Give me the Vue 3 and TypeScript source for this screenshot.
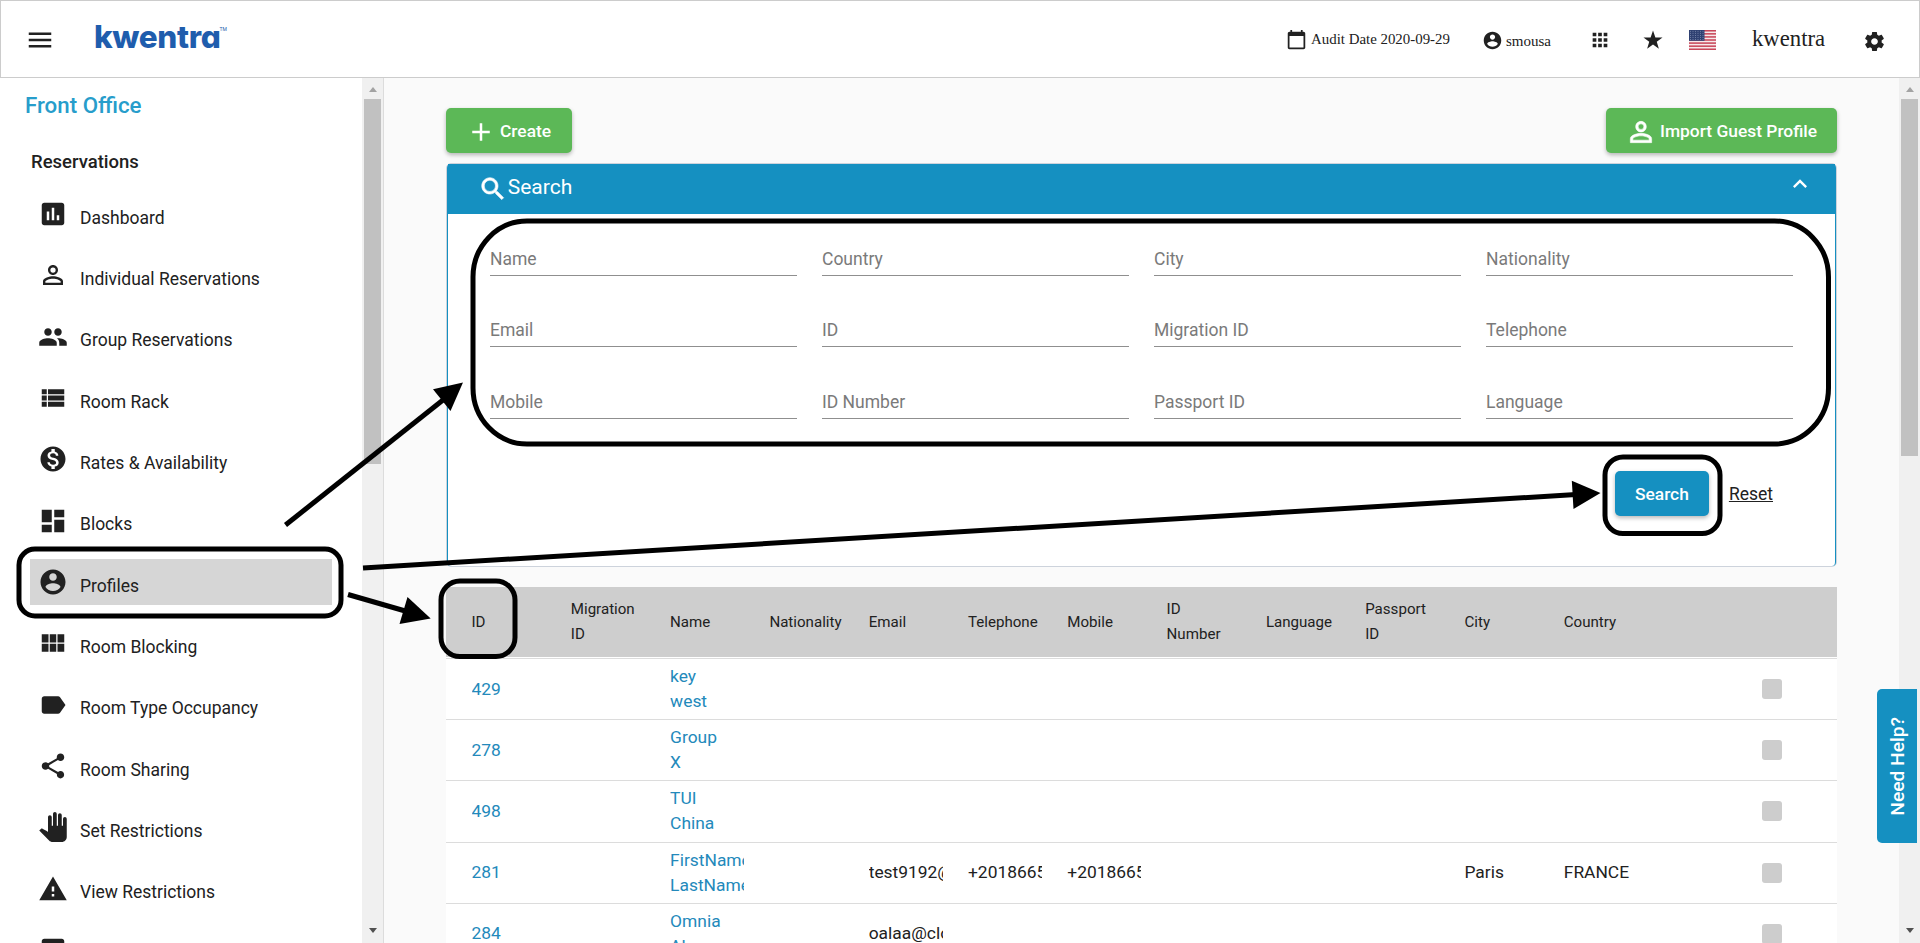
<script setup lang="ts">
interface NavItem {
  label: string
  icon: string
  active?: boolean
}

interface Profile {
  id: string
  name: string[]
  email?: string
  telephone?: string
  mobile?: string
  city?: string
  country?: string
}

const icons = {
  menu: 'M3 18h18v-2H3v2zm0-5h18v-2H3v2zm0-7v2h18V6H3z',
  chart: 'M19 3H5c-1.1 0-2 .9-2 2v14c0 1.1.9 2 2 2h14c1.1 0 2-.9 2-2V5c0-1.1-.9-2-2-2zM9 17H7v-7h2v7zm4 0h-2V7h2v10zm4 0h-2v-4h2v4z',
  personOutline: 'M12 5.9a2.1 2.1 0 1 1 0 4.2 2.1 2.1 0 0 1 0-4.2m0 9c2.97 0 6.1 1.46 6.1 2.1v1.1H5.9V17c0-.64 3.13-2.1 6.1-2.1M12 4C9.79 4 8 5.79 8 8s1.79 4 4 4 4-1.79 4-4-1.79-4-4-4zm0 9c-2.67 0-8 1.34-8 4v3h16v-3c0-2.66-5.33-4-8-4z',
  people: 'M16 11c1.66 0 2.99-1.34 2.99-3S17.66 5 16 5s-3 1.34-3 3 1.34 3 3 3zm-8 0c1.66 0 2.99-1.34 2.99-3S9.66 5 8 5 5 6.34 5 8s1.34 3 3 3zm0 2c-2.33 0-7 1.17-7 3.5V19h14v-2.5c0-2.33-4.67-3.5-7-3.5zm8 0c-.29 0-.62.02-.97.05 1.16.84 1.97 1.97 1.97 3.45V19h6v-2.5c0-2.33-4.67-3.5-7-3.5z',
  viewList: 'M3 14h4v-4H3v4zm0 5h4v-4H3v4zM3 9h4V5H3v4zm5 5h13v-4H8v4zm0 5h13v-4H8v4zM8 5v4h13V5H8z',
  money: 'M12 2C6.48 2 2 6.48 2 12s4.48 10 10 10 10-4.48 10-10S17.52 2 12 2zm1.41 16.09V20h-2.67v-1.93c-1.71-.36-3.16-1.46-3.27-3.4h1.96c.1 1.05.82 1.87 2.65 1.87 1.96 0 2.4-.98 2.4-1.59 0-.83-.44-1.61-2.67-2.14-2.48-.6-4.18-1.62-4.18-3.67 0-1.72 1.39-2.84 3.11-3.21V4h2.67v1.95c1.86.45 2.79 1.86 2.85 3.39H14.3c-.05-1.11-.64-1.87-2.22-1.87-1.5 0-2.4.68-2.4 1.64 0 .84.65 1.39 2.67 1.91s4.18 1.39 4.18 3.91c-.01 1.83-1.38 2.83-3.12 3.16z',
  dashboard: 'M3 13h8V3H3v10zm0 8h8v-6H3v6zm10 0h8V11h-8v10zm0-18v6h8V3h-8z',
  account: 'M12 2C6.48 2 2 6.48 2 12s4.48 10 10 10 10-4.48 10-10S17.52 2 12 2zm0 3c1.66 0 3 1.34 3 3s-1.34 3-3 3-3-1.34-3-3 1.34-3 3-3zm0 14.2c-2.5 0-4.71-1.28-6-3.22.03-1.99 4-3.08 6-3.08 1.99 0 5.97 1.09 6 3.08-1.29 1.94-3.5 3.22-6 3.22z',
  viewModule: 'M3 11.5h5.4V5H3v6.5zm0 7.5h5.4v-6.5H3V19zm6.4 0h5.2v-6.5H9.4V19zm6.2 0H21v-6.5h-5.4V19zM9.4 11.5h5.2V5H9.4v6.5zM15.6 5v6.5H21V5h-5.4z',
  label: 'M17.63 5.84C17.27 5.33 16.67 5 16 5L5 5.01C3.9 5.01 3 5.9 3 7v10c0 1.1.9 1.99 2 1.99L16 19c.67 0 1.27-.33 1.63-.84L22 12l-4.37-6.16z',
  share: 'M18 16.08c-.76 0-1.44.3-1.96.77L8.91 12.7c.05-.23.09-.46.09-.7s-.04-.47-.09-.7l7.05-4.11c.54.5 1.25.81 2.04.81 1.66 0 3-1.34 3-3s-1.34-3-3-3-3 1.34-3 3c0 .24.04.47.09.7L8.04 9.81C7.5 9.31 6.79 9 6 9c-1.66 0-3 1.34-3 3s1.34 3 3 3c.79 0 1.5-.31 2.04-.81l7.12 4.16c-.05.21-.08.43-.08.65 0 1.61 1.31 2.92 2.92 2.92s2.92-1.31 2.92-2.92-1.31-2.92-2.92-2.92z',
  hand: 'M23 5.5V20c0 2.2-1.8 4-4 4h-7.3c-1.08 0-2.1-.43-2.85-1.19L1 14.83s1.26-1.23 1.3-1.25c.22-.19.49-.29.79-.29.22 0 .42.06.6.16.04.01 4.31 2.46 4.31 2.46V4c0-.83.67-1.5 1.5-1.5S11 3.17 11 4v7h1V1.5c0-.83.67-1.5 1.5-1.5S15 .67 15 1.5V11h1V2.5c0-.83.67-1.5 1.5-1.5s1.5.67 1.5 1.5V11h1V5.5c0-.83.67-1.5 1.5-1.5s1.5.67 1.5 1.5z',
  warning: 'M1 21h22L12 2 1 21zm12-3h-2v-2h2v2zm0-4h-2v-4h2v4z',
  calendar: 'M20 3h-1V1h-2v2H7V1H5v2H4c-1.1 0-2 .9-2 2v16c0 1.1.9 2 2 2h16c1.1 0 2-.9 2-2V5c0-1.1-.9-2-2-2zm0 18H4V8h16v13z',
  apps: 'M4 8h4V4H4v4zm6 12h4v-4h-4v4zm-6 0h4v-4H4v4zm0-6h4v-4H4v4zm6 0h4v-4h-4v4zm6-10v4h4V4h-4zm-6 4h4V4h-4v4zm6 6h4v-4h-4v4zm0 6h4v-4h-4v4z',
  star: 'M12 1.6l2.6 7.6H22.4l-6.3 4.7 2.3 7.7-6.4-4.7-6.4 4.7 2.3-7.7-6.3-4.7h7.8z',
  gear: 'M19.43 12.98c.04-.32.07-.64.07-.98s-.03-.66-.07-.98l2.11-1.65c.19-.15.24-.42.12-.64l-2-3.46c-.12-.22-.39-.3-.61-.22l-2.49 1c-.52-.4-1.08-.73-1.69-.98l-.38-2.65C14.46 2.18 14.25 2 14 2h-4c-.25 0-.46.18-.49.42l-.38 2.65c-.61.25-1.17.59-1.69.98l-2.49-1c-.23-.09-.49 0-.61.22l-2 3.46c-.13.22-.07.49.12.64l2.11 1.65c-.04.32-.07.65-.07.98s.03.66.07.98l-2.11 1.65c-.19.15-.24.42-.12.64l2 3.46c.12.22.39.3.61.22l2.49-1c.52.4 1.08.73 1.69.98l.38 2.65c.03.24.24.42.49.42h4c.25 0 .46-.18.49-.42l.38-2.65c.61-.25 1.17-.59 1.69-.98l2.49 1c.23.09.49 0 .61-.22l2-3.46c.12-.22.07-.49-.12-.64l-2.11-1.65zM12 15.5c-1.93 0-3.5-1.57-3.5-3.5s1.57-3.5 3.5-3.5 3.5 1.57 3.5 3.5-1.57 3.5-3.5 3.5z',
  add: 'M19 13h-6v6h-2v-6H5v-2h6V5h2v6h6v2z',
  search: 'M15.5 14h-.79l-.28-.27C15.41 12.59 16 11.11 16 9.5 16 5.91 13.09 3 9.5 3S3 5.91 3 9.5 5.91 16 9.5 16c1.61 0 3.09-.59 4.23-1.57l.27.28v.79l5 4.99L20.49 19l-4.99-5zm-6 0C7.01 14 5 11.99 5 9.5S7.01 5 9.5 5 14 7.01 14 9.5 11.99 14 9.5 14z',
  expandLess: 'M12 8l-6 6 1.41 1.41L12 10.83l4.59 4.58L18 14z',
}

const nav: NavItem[] = [
  { label: 'Dashboard', icon: icons.chart },
  { label: 'Individual Reservations', icon: icons.personOutline },
  { label: 'Group Reservations', icon: icons.people },
  { label: 'Room Rack', icon: icons.viewList },
  { label: 'Rates & Availability', icon: icons.money },
  { label: 'Blocks', icon: icons.dashboard },
  { label: 'Profiles', icon: icons.account, active: true },
  { label: 'Room Blocking', icon: icons.viewModule },
  { label: 'Room Type Occupancy', icon: icons.label },
  { label: 'Room Sharing', icon: icons.share },
  { label: 'Set Restrictions', icon: icons.hand },
  { label: 'View Restrictions', icon: icons.warning },
  { label: '', icon: icons.chart },
]

const fields: string[] = [
  'Name', 'Country', 'City', 'Nationality',
  'Email', 'ID', 'Migration ID', 'Telephone',
  'Mobile', 'ID Number', 'Passport ID', 'Language',
]

const columns: string[] = [
  'ID', 'Migration ID', 'Name', 'Nationality', 'Email', 'Telephone',
  'Mobile', 'ID Number', 'Language', 'Passport ID', 'City', 'Country',
]

const profiles: Profile[] = [
  { id: '429', name: ['key', 'west'] },
  { id: '278', name: ['Group', 'X'] },
  { id: '498', name: ['TUI', 'China'] },
  { id: '281', name: ['FirstName', 'LastName'], email: 'test9192@', telephone: '+2018665', mobile: '+2018665', city: 'Paris', country: 'FRANCE' },
  { id: '284', name: ['Omnia', 'Alaa'], email: 'oalaa@clo' },
]

const stripes: number[] = [0, 2, 4, 6, 8, 10, 12]
</script>

<template>
  <div class="app">
    <header class="topbar">
      <svg class="ic menu" viewBox="0 0 24 24"><path :d="icons.menu" /></svg>
      <div class="logo"><span class="word">kwentra</span><span class="tm">TM</span></div>
      <div class="tools">
        <svg class="ic cal" viewBox="0 0 24 24"><path :d="icons.calendar" /></svg>
        <span class="audit">Audit Date 2020-09-29</span>
        <svg class="ic usr" viewBox="0 0 24 24"><path :d="icons.account" /></svg>
        <span class="user">smousa</span>
        <svg class="ic apps" viewBox="0 0 24 24"><path :d="icons.apps" /></svg>
        <svg class="ic star" viewBox="0 0 24 24"><path :d="icons.star" /></svg>
        <svg class="flag" viewBox="0 0 27 20" preserveAspectRatio="none">
          <rect width="27" height="20" fill="#f6e9ea" />
          <rect v-for="s in stripes" :key="s" x="0" :y="s * 1.54" width="27" height="1.54" fill="#c8475a" />
          <rect width="15.5" height="10.8" fill="#2f4172" />
          <g fill="#8390b4">
            <template v-for="r in 5" :key="r">
              <circle v-for="c in 6" :key="c" :cx="c * 2.5 - 1" :cy="r * 2.1 - 0.9" r="0.5" />
            </template>
          </g>
        </svg>
        <span class="hotel">kwentra</span>
        <svg class="ic gear" viewBox="0 0 24 24"><path :d="icons.gear" /></svg>
      </div>
    </header>

    <div class="body">
      <aside class="sidebar">
        <nav class="nav">
          <h2>Front Office</h2>
          <h3>Reservations</h3>
          <ul>
            <li v-for="(item, i) in nav" :key="i" :class="{ active: item.active }">
              <svg class="ic" viewBox="0 0 24 24"><path :d="item.icon" /></svg>
              <span>{{ item.label }}</span>
            </li>
          </ul>
        </nav>
        <div class="scroll side">
          <i class="up"></i>
          <div class="thumb"></div>
          <i class="down"></i>
        </div>
      </aside>

      <main class="content">
        <div class="actions">
          <button class="btn green create">
            <svg class="ic" viewBox="0 0 24 24"><path :d="icons.add" /></svg>
            <span>Create</span>
          </button>
          <button class="btn green import">
            <svg class="ic" viewBox="0 0 24 24"><path :d="icons.personOutline" /></svg>
            <span>Import Guest Profile</span>
          </button>
        </div>

        <section class="panel">
          <div class="inner">
            <div class="head">
              <svg class="ic glass" viewBox="0 0 24 24"><path :d="icons.search" /></svg>
              <span>Search</span>
              <svg class="ic less" viewBox="0 0 24 24"><path :d="icons.expandLess" /></svg>
            </div>
            <div class="fields">
              <div v-for="f in fields" :key="f" class="field">{{ f }}</div>
            </div>
            <div class="submit">
              <button class="btn blue">Search</button>
              <a class="reset">Reset</a>
            </div>
          </div>
        </section>

        <div class="table">
          <div class="tr th">
            <div v-for="c in columns" :key="c" class="td"><span>{{ c }}</span></div>
          </div>
          <div v-for="p in profiles" :key="p.id" class="tr">
            <div class="td link">{{ p.id }}</div>
            <div class="td"></div>
            <div class="td link"><div v-for="n in p.name" :key="n">{{ n }}</div></div>
            <div class="td"></div>
            <div class="td">{{ p.email }}</div>
            <div class="td">{{ p.telephone }}</div>
            <div class="td">{{ p.mobile }}</div>
            <div class="td"></div>
            <div class="td"></div>
            <div class="td"></div>
            <div class="td">{{ p.city }}</div>
            <div class="td">{{ p.country }}</div>
            <span class="check"></span>
          </div>
        </div>
      </main>

      <div class="scroll page">
        <i class="up"></i>
        <div class="thumb"></div>
        <i class="down"></i>
      </div>
    </div>

    <div class="help"><span>Need Help?</span></div>

    <svg class="notes" viewBox="0 0 1920 943">
      <g fill="none" stroke="#000" stroke-width="5">
        <rect x="19" y="549" width="322" height="67" rx="16" />
        <rect x="473" y="221" width="1355.5" height="223" rx="54" ry="56" />
        <rect x="1605" y="457" width="115" height="76.5" rx="18" />
        <rect x="441" y="581" width="74" height="75.5" rx="19" />
        <path d="M285.5 525 443 400" />
        <path d="M363 568 1576 494.5" />
        <path d="M348 594.5 407 611.5" />
      </g>
      <path d="M463 382.6 433 389.3 450.5 411z" />
      <path d="M1600.5 493 1571.8 480.8 1573.5 509z" />
      <path d="M430.7 618.6 407.5 597 399.5 624z" />
    </svg>
  </div>
</template>

<style>
html,
body {
  margin: 0;
  overflow: hidden;
}
</style>

<style scoped>
.app {
  position: relative;
  width: 1920px;
  height: 943px;
  overflow: hidden;
  background: #fafafa;
  font-family: Roboto, "Liberation Sans", sans-serif;
  color: #212121;
  display: flex;
  flex-direction: column;
}
.ic {
  display: block;
  flex: none;
  width: 30px;
  height: 30px;
  fill: #212121;
}

/* top bar */
.topbar {
  box-sizing: border-box;
  height: 78px;
  flex: none;
  border: 1px solid #ccc;
  background: #fff;
  display: flex;
  align-items: flex-start;
  padding-left: 24px;
}
.menu { margin-top: 24px; }
.logo {
  display: flex;
  margin: 18px 0 0 39px;
  color: #1f5dad;
}
.word {
  font: 800 31.5px/36px Inter, sans-serif;
  font-feature-settings: "cv11", "ss03";
  letter-spacing: -0.35px;
  width: 125.5px;
}
.tm {
  font: 400 5px/8px Roboto, sans-serif;
  margin-top: 6px;
}
.tools {
  margin-left: auto;
  padding-right: 33px;
  display: flex;
  align-items: flex-start;
  font-family: "Liberation Serif", serif;
}
.cal { width: 21px; height: 21px; margin-top: 28px; }
.audit { font-size: 14.9px; line-height: 20px; margin: 28px 32px 0 4px; white-space: nowrap; width: 139px; }
.usr { width: 21px; height: 21px; margin-top: 29px; }
.user { font-size: 15px; line-height: 20px; margin: 30px 0 0 3px; width: 47px; }
.apps { width: 22px; height: 22px; margin: 28px 0 0 36px; }
.star { width: 22px; height: 22px; margin: 28px 0 0 31px; }
.flag { display: block; width: 27px; height: 20px; margin: 29px 0 0 25px; }
.hotel { font-size: 22.7px; line-height: 26px; margin: 25px 0 0 36px; width: 74px; }
.gear { width: 23px; height: 23px; margin: 29px 0 0 37px; }

.body {
  flex: 1;
  min-height: 0;
  display: flex;
}

/* sidebar */
.sidebar {
  width: 383px;
  flex: none;
  display: flex;
  background: #fff;
  border-right: 1px solid #dcdcdc;
}
.nav {
  flex: 1;
  overflow: hidden;
}
h2 {
  margin: 13px 0 0 25px;
  font-size: 22.3px;
  line-height: 28px;
  font-weight: 500;
  color: #279dcb;
}
h3 {
  margin: 31px 0 0 31px;
  font-size: 18.5px;
  line-height: 24px;
  font-weight: 500;
}
ul {
  margin: 17px 0 0;
  padding: 0;
  list-style: none;
}
li {
  box-sizing: border-box;
  height: 46px;
  margin: 0 30px 15.35px;
  padding-left: 7.7px;
  display: flex;
  align-items: center;
  font-size: 17.5px;
}
li .ic { margin: 0 12.3px 0 0; }
li span { margin-top: 7px; }
li.active { background: #d6d6d6; }

/* scrollbars */
.scroll {
  width: 21px;
  flex: none;
  background: #f0f0f0;
  display: flex;
  flex-direction: column;
  align-items: center;
}
.scroll .up {
  margin: 9px 0 7px;
  border: 4.5px solid transparent;
  border-top: 0;
  border-bottom: 5px solid #a3a3a3;
}
.scroll .down {
  margin: auto 0 10px;
  border: 4.5px solid transparent;
  border-bottom: 0;
  border-top: 5px solid #505050;
}
.thumb {
  width: 17px;
  background: #c1c1c1;
}
.side .thumb { height: 365px; }
.page .thumb { height: 357px; }

/* content */
.content {
  flex: 1;
  min-width: 0;
  padding: 30px 62px 0;
}
.actions {
  display: flex;
  justify-content: space-between;
}
.btn {
  box-sizing: border-box;
  height: 45px;
  border: 0;
  border-radius: 5px;
  padding: 0;
  color: #fff;
  font: 500 17.4px/46px Roboto, sans-serif;
  box-shadow: 0 2px 4px rgba(0, 0, 0, 0.28);
}
.green {
  background: #5cb857;
  display: flex;
  align-items: center;
}
.btn span { height: 45px; }
.btn .ic { fill: #fff; margin-top: 3px; }
.create { width: 126px; padding-left: 20px; }
.create span { margin-left: 4px; }
.import { width: 231px; padding-left: 19px; }
.import .ic { width: 32px; height: 32px; margin-top: 2px; }
.import .ic path { stroke: #fff; stroke-width: 0.4px; }
.import span { margin-left: 3px; white-space: nowrap; }

.panel {
  box-sizing: border-box;
  height: 404px;
  margin-top: 10px;
  border: 1px solid #cdd3dc;
  border-radius: 5px;
  background: #fff;
}
.inner {
  box-sizing: border-box;
  height: 100%;
  border: solid #1590c1;
  border-width: 0 1px;
  border-radius: 4px;
}
.head {
  height: 50px;
  display: flex;
  align-items: center;
  background: #1590c1;
  color: #fff;
  font-size: 21px;
  padding: 0 21px 0 29.7px;
}
.head .ic { fill: #fff; }
.glass path { stroke: #fff; stroke-width: 0.5px; }
.head span { margin: -4px 0 0 0; }
.head .less { width: 28px; height: 28px; margin: -10px 0 0 auto; }
.fields {
  display: grid;
  grid-template-columns: repeat(4, 307px);
  column-gap: 25px;
  grid-template-rows: 71px 72px 71.5px;
  padding-left: 42px;
}
.field {
  box-sizing: border-box;
  height: 62px;
  padding-top: 32px;
  line-height: 26px;
  border-bottom: 1px solid #8f8f8f;
  font-size: 17.5px;
  color: #7a7a7a;
}
.submit {
  display: flex;
  align-items: center;
  justify-content: flex-end;
  margin: 42.5px 62px 0 0;
}
.blue { width: 94px; background: #1590c1; text-align: center; }
.reset {
  margin-left: 20px;
  font-size: 17.5px;
  text-decoration: underline;
}

/* table */
.table { margin-top: 20px; }
.tr {
  box-sizing: border-box;
  height: 61.2px;
  display: flex;
  align-items: center;
  padding-left: 25.5px;
  background: #fff;
  border-bottom: 1px solid #dcdcdc;
  font-size: 17.4px;
  line-height: 25px;
}
.th {
  height: 72px;
  padding-bottom: 1px;
  background: #cecece;
  font-size: 15.1px;
  box-shadow: inset 0 -1px #fff;
}
.td {
  box-sizing: border-box;
  flex: none;
  width: 74px;
  margin-right: 25.3px;
  overflow: hidden;
}
.th .td { overflow: visible; padding-right: 10px; }
.link { color: #2389bb; }
.check {
  width: 20px;
  height: 20px;
  margin-left: 99px;
  border-radius: 3px;
  background: #cdcdcd;
}

.help {
  position: absolute;
  left: 1877px;
  top: 689px;
  width: 40px;
  height: 154px;
  border-radius: 5px 0 0 5px;
  background: #1590c1;
  color: #fff;
  font-size: 19.2px;
  font-weight: 500;
  display: flex;
  align-items: center;
  justify-content: center;
}
.help span {
  writing-mode: vertical-rl;
  transform: rotate(180deg);
}
.notes {
  position: absolute;
  left: 0;
  top: 0;
  width: 1920px;
  height: 943px;
}
</style>
